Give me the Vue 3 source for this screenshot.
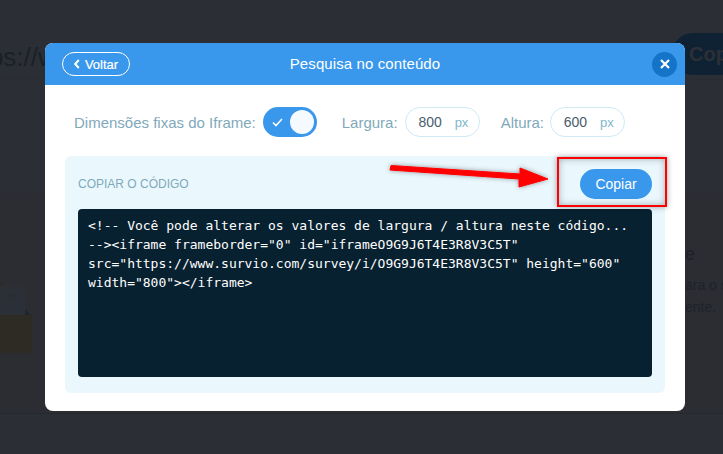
<template>
  <div class="page">
    <div class="bg">
      <div class="bg-top">
        <span class="bg-url">https://www.survio.com</span>
        <span class="bg-copy">Copiar</span>
      </div>
      <div class="bg-mid">
        <svg class="bg-box" width="34" height="78" viewBox="0 0 34 78">
          <path d="M0 6 L4 10 L0 10 Z" fill="#2e2a24" />
          <rect x="0" y="10" width="25" height="30" fill="#2b3038" />
          <rect x="0" y="10" width="25" height="4" fill="#2e2f32" />
          <rect x="7" y="19" width="10" height="6" rx="2" fill="#2a2d33" />
          <path d="M25 34 L31 40 L25 40 Z" fill="#1f2631" />
          <rect x="0" y="40" width="32" height="42" rx="2" fill="#2e2a24" />
        </svg>
        <div class="bg-text">
          <div class="bg-head">e</div>
          <div class="bg-line">ara o s</div>
          <div class="bg-line">ente.</div>
        </div>
      </div>
    </div>

    <div class="modal">
      <header class="modal-head">
        <button class="back">
          <svg width="6" height="10" viewBox="0 0 6 10"><path d="M4.8 1 L1.2 5 L4.8 9" fill="none" stroke="#fff" stroke-width="2" /></svg>
          <span>Voltar</span>
        </button>
        <h1 class="title">Pesquisa no conteúdo</h1>
        <button class="close">
          <svg width="10" height="10" viewBox="0 0 10 10"><path d="M1 1 L9 9 M9 1 L1 9" fill="none" stroke="#fff" stroke-width="2.2" /></svg>
        </button>
      </header>
      <div class="modal-body">
        <div class="options">
          <span class="label">Dimensões fixas do Iframe:</span>
          <span class="toggle">
            <svg width="11" height="9" viewBox="0 0 11 9"><path d="M1 4.5 L4 7.5 L10 1" fill="none" stroke="#fff" stroke-width="1.6" /></svg>
            <span class="knob"></span>
          </span>
          <span class="label gap-l">Largura:</span>
          <span class="field"><span class="num">800</span><span class="px">px</span></span>
          <span class="label gap-a">Altura:</span>
          <span class="field"><span class="num">600</span><span class="px">px</span></span>
        </div>
        <section class="panel">
          <div class="panel-head">
            <span class="caption">COPIAR O CÓDIGO</span>
            <button class="copy">Copiar</button>
          </div>
          <div class="code">&lt;!-- Você pode alterar os valores de largura / altura neste código...
--&gt;&lt;iframe frameborder="0" id="iframeO9G9J6T4E3R8V3C5T"
src="https://www.survio.com/survey/i/O9G9J6T4E3R8V3C5T" height="600"
width="800"&gt;&lt;/iframe&gt;</div>
        </section>
      </div>
    </div>

    <svg class="arrow" width="180" height="40" viewBox="0 0 180 40">
      <defs>
        <filter id="sh" x="-10%" y="-50%" width="120%" height="200%">
          <feDropShadow dx="0" dy="0" stdDeviation="2.5" flood-color="#000" flood-opacity="0.4" />
        </filter>
      </defs>
      <path d="M11 4.5 L140 13 L140 7 L168 18 L139 26 L139 18 L10 9 Z" fill="#f00" stroke="#f00" stroke-width="1" stroke-linejoin="round" filter="url(#sh)" />
    </svg>
    <div class="redbox"></div>
  </div>
</template>

<script setup>
</script>

<style>
html, body { margin: 0; background: #2b2e35; }
</style>

<style scoped>
.page {
  position: relative;
  width: 723px;
  height: 454px;
  overflow: hidden;
  background: #2b2e35;
  font-family: "Liberation Sans", Arial, sans-serif;
}
.bg {
  display: flex;
  flex-direction: column;
  height: 100%;
}
.bg-top {
  margin-top: 28px;
  height: 50px;
  border-top: 1px solid #282c34;
  border-bottom: 1px solid #282c34;
  display: flex;
  justify-content: space-between;
  align-items: center;
}
.bg-url {
  margin-left: -40px;
  padding-top: 6px;
  font-size: 26px;
  color: #1a2027;
  white-space: nowrap;
}
.bg-copy {
  width: 70px;
  height: 42px;
  line-height: 42px;
  padding-left: 17px;
  margin-right: -36px;
  flex: none;
  border-radius: 21px 0 0 21px;
  background: #0f2233;
  color: #2c3036;
  font-size: 20px;
  font-weight: 700;
}
.bg-mid {
  margin-top: 112px;
  height: 220px;
  border-top: 1px solid #292c33;
  border-bottom: 1px solid #25282d;
  display: flex;
  justify-content: space-between;
  background: #2b2d33;
}
.bg-box { margin-top: 82px; flex: none; }
.bg-text {
  margin-top: 51px;
  width: 38px;
  overflow: hidden;
  color: #1f2229;
  white-space: nowrap;
  font-size: 14px;
}
.bg-head { font-size: 18px; height: 30px; color: #221e2a; }
.bg-line { height: 22px; line-height: 22px; }

.modal {
  position: absolute;
  left: 45px;
  top: 43px;
  width: 640px;
  height: 368px;
  border-radius: 8px;
  background: #fff;
  overflow: hidden;
}
.modal-head {
  height: 42px;
  background: #3997ec;
  display: grid;
  grid-template-columns: 1fr auto 1fr;
  align-items: center;
  padding: 0 8px 0 17px;
}
button {
  font-family: inherit;
  border: 0;
  padding: 0;
  cursor: pointer;
}
.back {
  width: 68px;
  height: 24px;
  box-sizing: border-box;
  border: 1px solid #fff;
  border-radius: 12px;
  background: transparent;
  color: #fff;
  font-size: 13px;
  -webkit-text-stroke: 0.2px #fff;
  display: flex;
  align-items: center;
  justify-content: center;
  gap: 5px;
}
.title {
  margin: 0 0 2px 0;
  padding-right: 9px;
  font-size: 15px;
  letter-spacing: 0.1px;
  font-weight: 400;
  color: #fff;
}
.close {
  justify-self: end;
  width: 25px;
  height: 25px;
  border-radius: 50%;
  background: #1474c8;
  display: flex;
  align-items: center;
  justify-content: center;
}
.modal-body {
  padding: 22px 20px 18px 20px;
}
.options {
  display: flex;
  align-items: center;
  height: 30px;
  padding-left: 9px;
  margin-bottom: 19px;
}
.label {
  font-size: 15px;
  color: #7fa9bb;
}
.gap-l { margin-left: 25px; margin-right: 7px; }
.gap-a { margin-left: 21px; margin-right: 6px; }
.toggle {
  margin-left: 7px;
  width: 54px;
  height: 30px;
  border-radius: 15px;
  background: #3997ec;
  display: flex;
  align-items: center;
  justify-content: space-between;
  box-sizing: border-box;
  padding: 0 3px 0 9px;
}
.knob {
  width: 24px;
  height: 24px;
  border-radius: 50%;
  background: #f4faff;
}
.field {
  width: 75px;
  height: 30px;
  box-sizing: border-box;
  border: 1px solid #cfe9f7;
  border-radius: 15px;
  display: flex;
  align-items: center;
  padding-left: 7px;
}
.num {
  width: 35px;
  text-align: center;
  font-size: 14px;
  color: #4a5c6d;
}
.px {
  margin-left: 7px;
  font-size: 13px;
  color: #7fb7cc;
}
.panel {
  height: 237px;
  box-sizing: border-box;
  padding: 13px 13px 16px 13px;
  background: #eaf8fe;
  border-radius: 6px;
}
.panel-head {
  height: 30px;
  display: flex;
  align-items: center;
  justify-content: space-between;
  margin-bottom: 10px;
}
.caption {
  font-size: 12px;
  color: #7fa9bb;
}
.copy {
  width: 72px;
  height: 30px;
  border-radius: 15px;
  background: #3997ec;
  color: #fff;
  font-size: 14px;
}
.code {
  height: 168px;
  box-sizing: border-box;
  padding: 7px 10px;
  background: #082130;
  border-radius: 4px;
  color: #fff;
  font-family: "DejaVu Sans Mono", monospace;
  font-size: 13px;
  line-height: 19px;
  white-space: pre-wrap;
}
.arrow {
  position: absolute;
  left: 380px;
  top: 161px;
}
.redbox {
  position: absolute;
  left: 557px;
  top: 157px;
  width: 110px;
  height: 50px;
  box-sizing: border-box;
  border: 2px solid #f00;
  box-shadow: 0 0 6px rgba(0, 0, 0, 0.35), inset 0 0 7px rgba(0, 0, 0, 0.3);
}
</style>
